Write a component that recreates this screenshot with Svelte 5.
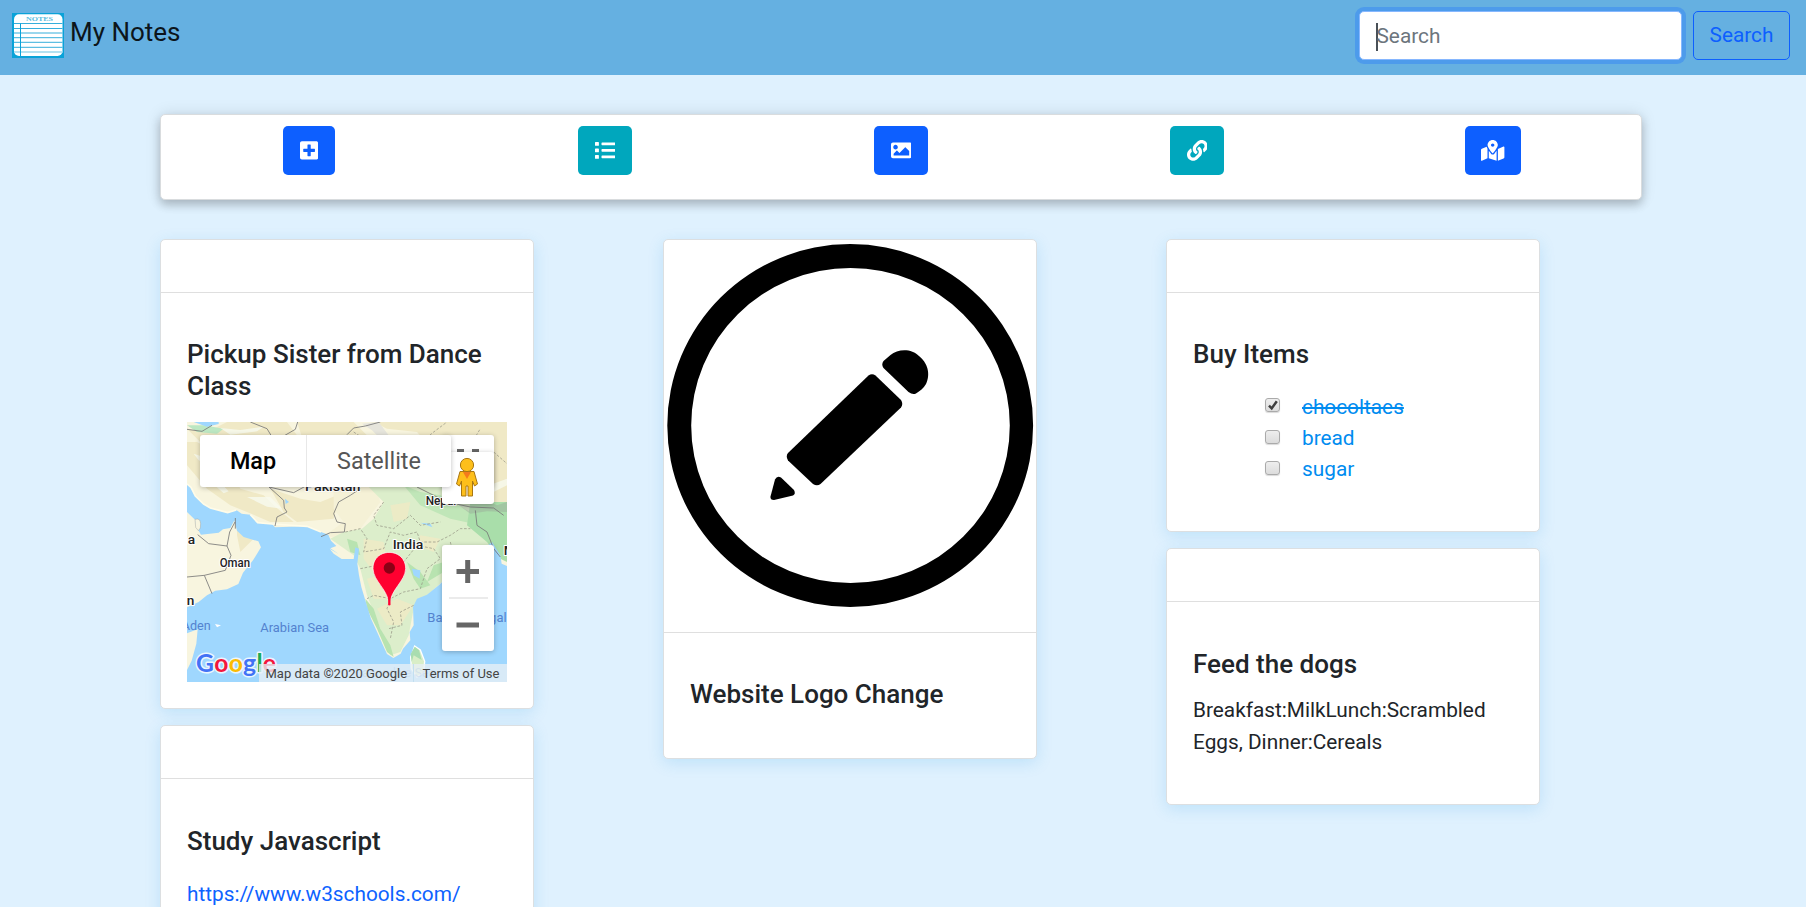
<script>
  const tools = [
    { label: 'Add note', tone: 'primary', vw: 448, w: 18.2, d: 'M400 32H48C21.5 32 0 53.5 0 80v352c0 26.5 21.5 48 48 48h352c26.5 0 48-21.5 48-48V80c0-26.5-21.5-48-48-48zm-32 252c0 6.600-5.400 12-12 12h-92v92c0 6.600-5.400 12-12 12h-56c-6.600 0-12-5.400-12-12v-92H92c-6.600 0-12-5.400-12-12v-56c0-6.600 5.400-12 12-12h92v-92c0-6.600 5.400-12 12-12h56c6.600 0 12 5.400 12 12v92h92c6.600 0 12 5.400 12 12v56z' },
    { label: 'Add list', tone: 'info', vw: 512, w: 20.8, d: 'M80 368H16a16 16 0 0 0-16 16v64a16 16 0 0 0 16 16h64a16 16 0 0 0 16-16v-64a16 16 0 0 0-16-16zm0-320H16A16 16 0 0 0 0 64v64a16 16 0 0 0 16 16h64a16 16 0 0 0 16-16V64a16 16 0 0 0-16-16zm0 160H16a16 16 0 0 0-16 16v64a16 16 0 0 0 16 16h64a16 16 0 0 0 16-16v-64a16 16 0 0 0-16-16zm416 176H176a16 16 0 0 0-16 16v32a16 16 0 0 0 16 16h320a16 16 0 0 0 16-16v-32a16 16 0 0 0-16-16zm0-320H176a16 16 0 0 0-16 16v32a16 16 0 0 0 16 16h320a16 16 0 0 0 16-16V80a16 16 0 0 0-16-16zm0 160H176a16 16 0 0 0-16 16v32a16 16 0 0 0 16 16h320a16 16 0 0 0 16-16v-32a16 16 0 0 0-16-16z' },
    { label: 'Add image', tone: 'primary', vw: 512, w: 20.8, d: 'M464 448H48c-26.510 0-48-21.490-48-48V112c0-26.510 21.490-48 48-48h416c26.510 0 48 21.490 48 48v288c0 26.510-21.490 48-48 48zM112 120c-30.928 0-56 25.072-56 56s25.072 56 56 56 56-25.072 56-56-25.072-56-56-56zM64 384h384V272l-87.515-87.515c-4.686-4.686-12.284-4.686-16.971 0L208 320l-55.515-55.515c-4.686-4.686-12.284-4.686-16.971 0L64 336v48z' },
    { label: 'Add link', tone: 'info', vw: 512, w: 20.8, d: 'M326.612 185.391c59.747 59.809 58.927 155.698.36 214.590-.11.120-.24.250-.36.370l-67.200 67.200c-59.270 59.270-155.699 59.262-214.960 0-59.270-59.260-59.270-155.700 0-214.960l37.106-37.106c9.840-9.840 26.786-3.300 27.294 10.606.648 17.722 3.826 35.527 9.690 52.721 1.986 5.822.567 12.262-3.783 16.612l-13.087 13.087c-28.026 28.026-28.905 73.660-1.155 101.960 28.024 28.579 74.086 28.749 102.325.510l67.200-67.190c28.191-28.191 28.073-73.757 0-101.830-3.701-3.694-7.429-6.564-10.341-8.569a16.037 16.037 0 0 1-6.947-12.606c-.396-10.567 3.348-21.456 11.698-29.806l21.054-21.055c5.521-5.521 14.182-6.199 20.584-1.731a152.482 152.482 0 0 1 20.522 17.197zM467.547 44.449c-59.261-59.262-155.690-59.270-214.960 0l-67.200 67.200c-.120.120-.250.250-.360.370-58.566 58.892-59.387 154.781.360 214.590a152.454 152.454 0 0 0 20.521 17.196c6.402 4.468 15.064 3.789 20.584-1.731l21.054-21.055c8.350-8.350 12.094-19.239 11.698-29.806a16.037 16.037 0 0 0-6.947-12.606c-2.912-2.005-6.640-4.875-10.341-8.569-28.073-28.073-28.191-73.639 0-101.830l67.200-67.190c28.239-28.239 74.300-28.069 102.325.510 27.750 28.300 26.872 73.934-1.155 101.960l-13.087 13.087c-4.350 4.350-5.769 10.790-3.783 16.612 5.864 17.194 9.042 34.999 9.690 52.721.509 13.906 17.454 20.446 27.294 10.606l37.106-37.106c59.271-59.259 59.271-155.699.001-214.959z' },
    { label: 'Add place', tone: 'primary', vw: 576, w: 23.4, d: 'M288 0c-69.590 0-126 56.410-126 126 0 56.260 82.350 158.800 113.900 196.020 6.390 7.540 17.820 7.540 24.200 0C331.650 284.800 414 182.260 414 126 414 56.410 357.590 0 288 0zm0 168c-23.200 0-42-18.800-42-42s18.800-42 42-42 42 18.800 42 42-18.800 42-42 42zM20.120 215.950A32.006 32.006 0 0 0 0 245.660v250.320c0 11.320 11.430 19.060 21.940 14.860L160 448V214.920c-8.840-15.980-16.070-31.540-21.250-46.420L20.120 215.950zM288 359.670c-14.070 0-27.380-6.180-36.510-16.960-19.660-23.200-40.570-49.620-59.490-76.720v182l192 64V266c-18.920 27.090-39.820 53.520-59.490 76.720-9.130 10.770-22.440 16.950-36.510 16.950zm266.060-198.510L416 224v288l139.880-55.950A31.996 31.996 0 0 0 576 426.340V176.020c0-11.320-11.430-19.060-21.940-14.860z' }
  ];
  let items = $state([
    { text: 'chocoltaes', done: true },
    { text: 'bread', done: false },
    { text: 'sugar', done: false }
  ]);
</script>

<div class="page">
  <nav>
    <div class="brand">
      <svg class="logo" width="52" height="45" viewBox="0 0 52 45">
        <rect width="52" height="45" fill="#0aa2d8" />
        <rect x="2" y="1.300" width="48.500" height="41.700" rx="5" fill="#fff" />
        <text x="14" y="8.300" textLength="27" lengthAdjust="spacingAndGlyphs" class="notes">NOTES</text>
        <path d="M2 10.500H50.500M2 15.500H50.500M2 20H50.500M2 24.700H50.500M2 29.300H50.500M2 34.300H50.500" stroke="#35aedb" stroke-width="1" />
        <path d="M2 39H50.500" stroke="#b5e1f1" stroke-width="1.800" />
        <path d="M8.500 10.500V43" stroke="#0aa2d8" stroke-width="1" />
      </svg>
      <span>My Notes</span>
    </div>
    <form class="search">
      <div class="field"><i class="caret"></i><span>Search</span></div>
      <button type="button" class="go">Search</button>
    </form>
  </nav>

  <div class="toolbar">
    {#each tools as t}
      <div class="slot">
        <button class="tool {t.tone}" aria-label={t.label}>
          <svg width={t.w} height="20.8" viewBox="0 0 {t.vw} 512"><path fill="#fff" d={t.d} /></svg>
        </button>
      </div>
    {/each}
  </div>

  <main>
    <div class="col">
      <article class="card">
        <header></header>
        <div class="body place-note">
          <h5>Pickup Sister from Dance Class</h5>
          <div class="map">
            <svg class="tiles" width="320" height="260" viewBox="0 0 960 780">
              <rect width="960" height="780" fill="#f8f5df" />
              <g fill="#f0e9c6">
                <path d="M0 20L60 30 120 0H300L330 40 200 60 120 40 40 60ZM30 60L120 110 160 200 230 220 260 250 320 300 250 300 180 270 130 250 60 200 0 130V60ZM330 0H500L560 60 420 90 350 60ZM250 200L340 230 400 240 450 220 470 180 540 190 450 250 440 290 330 300 290 270ZM150 300L200 350 160 390 150 340Z" />
                <path d="M560 0H960V260L860 240 780 130 690 30 600 20Z" />
                <path d="M440 200L520 150 560 180 580 240 520 320 460 350 415 340 470 300 440 260Z" fill="#f5f1d6" />
              </g>
              <g fill="#dceecb">
                <path d="M525 320L470 330 430 350 500 400 520 440 540 520 580 620 610 700 640 690 665 640 680 560 720 520 765 480 800 440 960 380V240L860 240 760 190 690 150 620 120 560 160 540 190 590 240 560 290Z" />
                <path d="M0 10L50 10 110 20 90 35 30 30Z" fill="#bce7c2" />
                <path d="M560 60L640 90 690 150 640 150 600 120 540 110ZM650 190L700 210 760 220 850 270 950 290 960 340 880 310 790 290 700 250Z" fill="#c0e6b8" />
                <path d="M850 240H960V420L940 410 900 360 840 310Z" fill="#a9deaa" />
                <path d="M535 530L560 560 580 620 610 670 620 705 600 690 570 620 540 560ZM660 420L700 450 730 490 700 500 680 470ZM480 350L510 360 520 400 490 390ZM740 430L770 420 770 450 720 480Z" fill="#b8e3b0" />
              </g>
              <g fill="#f2e9c4" opacity=".75">
                <path d="M530 350L590 360 600 420 560 450 530 410ZM570 560L630 530 680 550 640 610 600 610ZM700 340L760 350 740 390 690 370ZM540 470L580 460 600 530 560 530ZM610 250L670 240 660 290 620 300Z" />
              </g>
              <g fill="#f7faef" opacity=".8">
                <path d="M20 95L60 108 90 130 70 132 35 115ZM100 18L160 24 230 14 210 28 130 38ZM185 50L290 45 350 68 250 66ZM55 165L90 172 125 208 110 214ZM180 225L250 225 285 260 240 254ZM420 185L470 172 450 200 400 206ZM680 60L780 74 840 104 770 96ZM850 210L960 170V190L870 235Z" />
              </g>
              <path d="M525 5L575 0 605 40 585 55 555 25Z" fill="#e6e5dc" />
              <path d="M810 246L870 225 930 250 960 240V270L900 268 850 275Z" fill="#9aa898" opacity=".45" />
              <g fill="#9fd7fe">
                <path d="M0 186L12 196 25 222 50 246 70 258 100 266 122 272 148 264 164 275 190 278 212 302 255 306 264 316 360 313 402 330 424 338 432 356 448 372 430 379 455 396 428 380 440 395 464 411 500 411 505 376 516 380 511 425 516 460 523 495 538 545 552 590 572 634 588 670 600 696 619 708 641 695 648 680 670 655 668 630 680 610 678 555 690 530 720 518 757 488 775 470 830 430 915 360 940 400 944 425 960 432V780H0V744L14 716 28 665 32 622 0 634V556L35 540 60 520 85 506 120 502 154 486 168 452 198 415 222 376 214 358 170 345 150 326 142 295 130 318 108 322 95 332 42 338 28 314 24 293 0 270Z" />
                <path d="M20 0H95V6L60 14ZM294 230L306 240 296 246ZM700 302L730 305 736 316ZM675 440L700 445 698 470 680 460ZM650 125L665 128 660 133Z" />
              </g>
              <path d="M24 292Q45 285 40 318L34 326 26 316Z" fill="#f8f5df" stroke="#888" />
              <path d="M683 672L700 684 713 718 710 752 690 765 673 740 671 705 677 690Z" fill="#d9eec7" stroke="#fff" stroke-width="4" />
              <path d="M683 674L696 684 704 714 680 700 674 720 671 696Z" fill="#a9ddb0" />
              <path d="M84 606L102 610 90 616Z" fill="#fff" />
              <path d="M0 186L12 196 25 222 50 246 70 258 100 266 122 272 148 264M190 278L212 302 255 306 360 313 402 330" fill="none" stroke="#fffce9" stroke-width="5" />
              <g fill="none" stroke="#777" stroke-width="2.500">
                <path d="M190 0L240 20 255 45 240 75 246 195 290 235 292 258 300 270 270 285 264 312M246 195L320 212 360 190 470 165 520 200 490 220 455 240 440 275 450 300 475 305 472 330 430 332 402 344M332 0L325 22 285 45M480 38L500 18 535 12 580 0M32 338L65 365 120 372 128 330 144 300M120 372L132 400 115 445 52 460 0 465M52 460L75 515M690 195L780 240 850 255 920 258 950 280M865 265L870 310 900 330 920 380 940 405M0 22L45 28 75 10M145 288V320" />
              </g>
              <g fill="none" stroke="#959585" stroke-width="2.200" stroke-dasharray="8 5">
                <path d="M475 330L520 320 540 350 530 390 590 380 610 330 650 340 690 330 700 360 750 360 790 340 820 320 850 320M590 240L560 280 570 310 620 320 670 280 700 310 760 300M520 440L570 430 600 450 650 420 690 370 740 380 760 410 720 440 700 500 650 510 610 530 560 520 540 530M610 530L600 560 620 600 610 650M680 550L640 570 645 610 605 620M500 30L560 70 610 90 650 60 710 55 740 30 780 0M650 90L710 130 770 90 850 70 880 20M920 90L960 125M790 360L800 400 770 430" />
              </g>
              <g class="place">
                <text x="354" y="208" textLength="166" lengthAdjust="spacingAndGlyphs" class="big">Pakistan</text>
                <text x="716" y="248" textLength="92" lengthAdjust="spacingAndGlyphs">Nepal</text>
                <text x="617" y="382" textLength="92" lengthAdjust="spacingAndGlyphs" class="big">India</text>
                <text x="98" y="436" textLength="91" lengthAdjust="spacingAndGlyphs">Oman</text>
                <text x="2" y="366" class="big">a</text>
                <text x="-1" y="549" class="big">n</text>
                <text x="950" y="398" class="big">M</text>
              </g>
              <g class="sea">
                <text x="-16" y="624">Aden</text>
                <text x="220" y="629" textLength="206" lengthAdjust="spacingAndGlyphs">Arabian Sea</text>
                <text x="721" y="601" textLength="238" lengthAdjust="spacingAndGlyphs">Bay of Bengal</text>
                <text x="505" y="765" textLength="240" opacity=".6">Laccadive Sea</text>
              </g>
              <path d="M607 551C603 500 560 480 558 440C557 375 656 375 656 440C654 480 611 500 607 551Z" fill="#ff0030" stroke="#fff" stroke-width="2" />
              <path d="M607 500V547" stroke="#ff0030" stroke-width="7" stroke-linecap="round" />
              <circle cx="607" cy="438" r="17" fill="#8b0015" />
              <text x="27" y="751" textLength="240" class="google"><tspan fill="#4272f5">G</tspan><tspan fill="#f4173d">o</tspan><tspan fill="#fbbc04">o</tspan><tspan fill="#4272f5">g</tspan><tspan fill="#1aab55">l</tspan><tspan fill="#f4173d">e</tspan></text>
            </svg>
            <div class="legal"><span>Map data ©2020 Google</span><span>Terms of Use</span></div>
            <div class="ctl full"><i></i><i></i></div>
            <div class="ctl peg">
              <svg width="24" height="41" viewBox="0 0 24 41">
                <path d="M5 14.500H19L22.500 27 19.500 29 17.500 24V39H13V29H11V39H6.500V24L4.500 29 1.500 27Z" fill="#fdbf1b" stroke="#a97712" stroke-width="1" stroke-linejoin="round" />
                <path d="M8 15H16L12 22Z" fill="#f47b1c" />
                <circle cx="12" cy="8" r="6.600" fill="#fdbf1b" stroke="#a97712" />
              </svg>
            </div>
            <div class="ctl types"><b>Map</b><span>Satellite</span></div>
            <div class="ctl zoom">
              <svg width="52" height="106" viewBox="0 0 52 106"><path d="M14.500 26.500H37M25.700 15V38M14.500 80H37" stroke="#666" stroke-width="5" /><path d="M7 53H46" stroke="#e4e4e4" stroke-width="1.500" /></svg>
            </div>
          </div>
        </div>
      </article>

      <article class="card">
        <header></header>
        <div class="body link">
          <h5>Study Javascript</h5>
          <a href="#study">https://www.w3schools.com/</a>
        </div>
      </article>
    </div>

    <div class="col">
      <article class="card">
        <header class="picture">
          <svg width="372" height="392" viewBox="664 240 372 392">
            <path fill-rule="evenodd" d="M667.300 425.500a182.900 181.300 0 1 0 365.800 0a182.900 181.300 0 1 0-365.800 0ZM691.200 425.500a159.300 157.500 0 1 0 318.600 0a159.300 157.500 0 1 0-318.600 0Z" />
            <path d="M868.500 375.500Q872 373 875.500 375.500L901 400Q903.500 404 901 407.500L820.500 484Q817 486.500 813 484L788 460.500Q785.500 456 788 453Z" />
            <path d="M883.500 368Q881 364.500 883.500 361L890.500 355C898 348.500 912 348.500 919 356C930 365 929.500 377 926 384C923.500 388.500 920 391 916 393.500Q912.500 395 908.500 392Z" />
            <path d="M775 479.500Q777 475.500 781 477.500L794 490Q796 494 793 495.500L774 500Q770 500 770.500 496.500Z" />
          </svg>
        </header>
        <div class="body"><h5 class="last">Website Logo Change</h5></div>
      </article>
    </div>

    <div class="col">
      <article class="card">
        <header></header>
        <div class="body">
          <h5>Buy Items</h5>
          <ul>
            {#each items as item}
              <li class:done={item.done}>
                <button class="box" aria-label="Toggle {item.text}" onclick={() => (item.done = !item.done)}>
                  {#if item.done}<svg width="12" height="12" viewBox="0 0 12 12"><path d="M2 6.700L4.700 9.400 9.800 2.300" fill="none" stroke="#3d3d3d" stroke-width="2.500" /></svg>{/if}
                </button>
                <span>{item.text}</span>
              </li>
            {/each}
          </ul>
        </div>
      </article>

      <article class="card">
        <header></header>
        <div class="body">
          <h5 class="tight">Feed the dogs</h5>
          <p>Breakfast:MilkLunch:Scrambled Eggs, Dinner:Cereals</p>
        </div>
      </article>
    </div>
  </main>
</div>

<style>
  :global(body) { margin: 0; background: #dff1fe; }
  * { box-sizing: border-box; }
  .page { height: 907px; overflow: hidden; font: 20.8px/31.2px Roboto, "Noto Sans", sans-serif; color: #212529; background: #dff1fe; }
  nav { height: 75px; background: #65b0e1; display: flex; justify-content: space-between; align-items: flex-start; padding: 11px 16px 0 12px; }
  .brand { display: flex; gap: 6px; padding-top: 2px; color: #0c151b; font-size: 26px; line-height: 39px; }
  .logo { display: block; }
  .notes { font: 700 7px "Liberation Serif", serif; fill: #58bce0; }
  .search { display: flex; gap: 11px; margin: 0; }
  .field { width: 323px; height: 49px; background: #fff; border: 1px solid #86b7fe; border-radius: 5px; box-shadow: 0 0 0 4px #4d9beb; padding: 2px 15px 0 16px; display: flex; align-items: center; color: #6c757d; }
  .caret { width: 2px; height: 28px; background: #495057; margin-right: -1.500px; }
  .go { width: 97px; height: 49px; border: 1px solid #0d5fff; border-radius: 5px; background: transparent; color: #0d5fff; font: inherit; padding: 1px 0 0; }
  .toolbar { width: 1482px; height: 86px; margin: 39px 0 0 160px; display: flex; background: #fff; border: 1px solid #d9dcde; border-radius: 5px; box-shadow: 0 5px 10px rgba(0,0,0,.2), 0 0 16px rgba(0,0,0,.11); }
  .slot { flex: 1; display: flex; justify-content: center; padding-top: 11px; }
  .tool { height: 49px; border: 0; border-radius: 5px; padding: 0 16.600px; display: flex; align-items: center; }
  .tool svg { display: block; }
  .primary { background: #0d5fff; }
  .info { background: #00a7bd; }
  main { display: flex; align-items: flex-start; gap: 129px; padding: 39px 0 0 160px; }
  .col { width: 374px; display: flex; flex-direction: column; gap: 16px; }
  .card { background: #fff; border: 1px solid #dcdfe1; border-radius: 5px; box-shadow: 0 4px 16px rgba(3,139,220,.15); }
  header { height: 53px; border-bottom: 1px solid #dfdfdf; }
  .picture { height: 393px; }
  .picture svg { display: block; }
  .body { padding: 46.400px 26px 25.400px; }
  h5 { font-size: 26px; line-height: 31.200px; font-weight: 500; margin: 0 0 20.800px; }
  h5.last { margin: 0; padding-bottom: 22px; }
  h5.tight { margin-bottom: 15.600px; }
  .place-note { padding-bottom: 26.200px; }
  .place-note h5 { margin-bottom: 20.200px; }
  p { margin: 0 0 20.800px; }
  a { color: #0d62ff; text-decoration: none; }
  .link { height: 180px; padding-top: 46.800px; }
  .link h5 { margin-bottom: 21.600px; }
  ul { list-style: none; margin: 0 0 20.800px; padding: 0 0 0 72px; }
  li { display: flex; align-items: flex-start; gap: 22px; color: #008cf0; }
  li span { position: relative; top: .5px; }
  li.done span { text-decoration: line-through; }
  .box { width: 15px; height: 14px; margin-top: 7px; padding: 0; border: 1px solid #aaa; border-radius: 3px; background: linear-gradient(#eee, #dcdcdc); box-shadow: 0 1px 1px rgba(0,0,0,.15); display: flex; align-items: center; justify-content: center; }
  .map { position: relative; width: 320px; height: 260px; overflow: hidden; }
  .tiles { display: block; }
  .place text { font: 500 36px Roboto, sans-serif; fill: #222; stroke: #fff; stroke-width: 6px; paint-order: stroke; stroke-linejoin: round; }
  .place .big { font-size: 41px; }
  .sea text { font: 400 38px Roboto, sans-serif; fill: #5382cf; }
  .google { font: 700 74px Lato, sans-serif; stroke: #eaf6ff; stroke-width: 9px; paint-order: stroke; stroke-linejoin: round; }
  .legal { position: absolute; right: 0; bottom: 0; width: 248px; height: 18px; display: flex; background: rgba(232,239,245,.78); font-size: 13px; line-height: 20px; color: #444; white-space: nowrap; }
  .legal span:first-child { width: 155px; padding-left: 6.500px; border-right: 1px solid #c3dff0; }
  .legal span:last-child { padding-left: 8.500px; }
  .ctl { position: absolute; background: #fff; border-radius: 3px; box-shadow: 0 1px 5px rgba(0,0,0,.25); }
  .full { left: 255px; top: 13px; width: 52px; height: 52px; display: flex; gap: 7.500px; padding: 14px 0 0 14.500px; }
  .full i { width: 7.500px; height: 3px; background: #666; }
  .peg { left: 255px; top: 30px; width: 52px; height: 52px; display: flex; justify-content: center; align-items: center; padding-right: 2px; }
  .types { left: 13px; top: 13px; width: 251px; height: 52px; display: flex; font-size: 23.400px; line-height: 52px; text-align: center; }
  .types b { width: 107px; color: #000; font-weight: 500; border-right: 1px solid #e8e8e8; }
  .types span { flex: 1; color: #565656; }
  .zoom { left: 255px; top: 123px; width: 52px; height: 106px; }
  .zoom svg { display: block; }
</style>
